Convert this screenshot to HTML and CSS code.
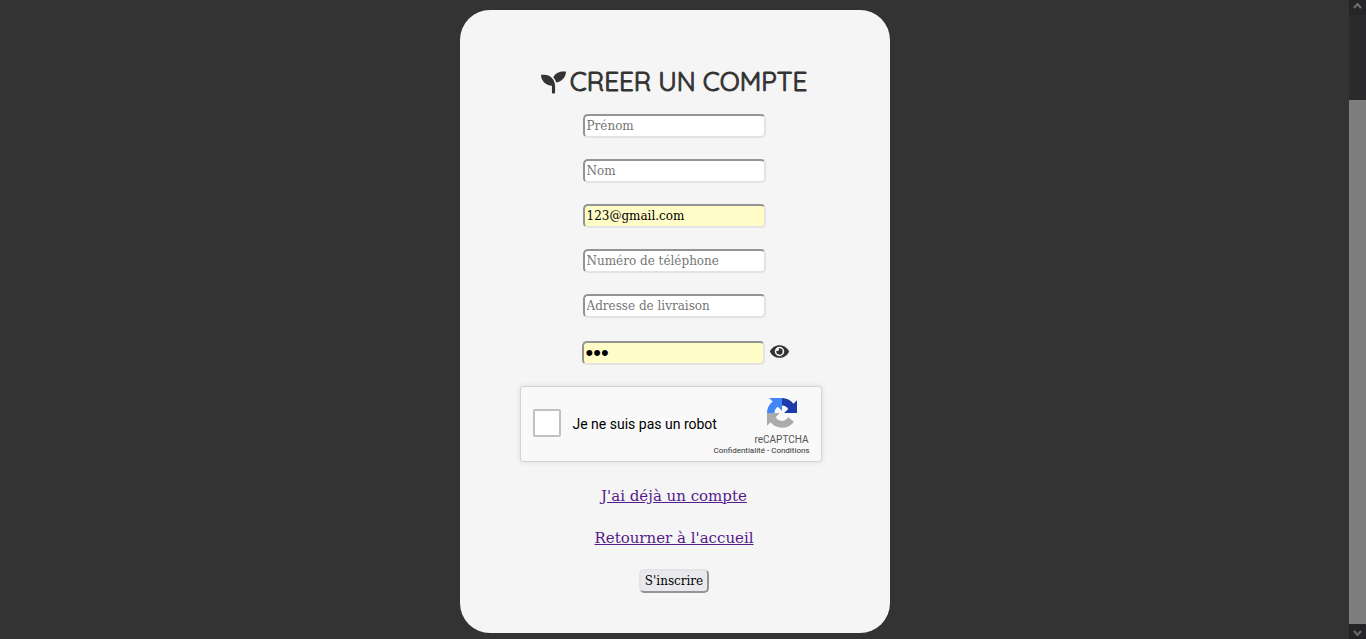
FILE: index.html
```
<!DOCTYPE html>
<html lang="fr">
<head>
<meta charset="utf-8">
<meta name="viewport" content="width=device-width, initial-scale=1">
<title>Créer un compte</title>
<link rel="stylesheet" href="styles.css">
</head>
<body>
<main class="page">
  <form class="card">
    <h1 class="title">
      <svg class="leaf" viewBox="0 0 512 512" aria-hidden="true"><path d="M64 96H0c0 123.700 100.300 224 224 224v144c0 8.800 7.200 16 16 16h32c8.800 0 16-7.200 16-16V320C288 196.300 187.700 96 64 96zm384-64c-84.200 0-157.400 46.500-195.700 115.200 27.700 30.200 48.200 66.900 59 107.600C424 243.100 512 147.900 512 32h-64z"/></svg>
      <span>CREER UN COMPTE</span>
    </h1>
    <div class="fields">
      <input class="field" type="text" placeholder="Prénom" aria-label="Prénom">
      <input class="field" type="text" placeholder="Nom" aria-label="Nom">
      <input class="field filled" type="email" value="123@gmail.com" aria-label="Adresse e-mail">
      <input class="field" type="tel" placeholder="Numéro de téléphone" aria-label="Numéro de téléphone">
      <input class="field" type="text" placeholder="Adresse de livraison" aria-label="Adresse de livraison">
    </div>
    <div class="password">
      <input class="field filled secret" type="password" value="123" aria-label="Mot de passe">
      <button class="reveal" type="button" aria-label="Afficher le mot de passe">
        <svg class="eye" viewBox="0 0 576 512" aria-hidden="true"><path d="M572.500 241.400C518.300 135.600 410.900 64 288 64S57.700 135.600 3.500 241.400a32.400 32.400 0 0 0 0 29.200C57.700 376.400 165.100 448 288 448s230.300-71.600 284.500-177.400a32.400 32.400 0 0 0 0-29.200zM288 400a144 144 0 1 1 144-144 143.900 143.900 0 0 1-144 144zm0-240a95.300 95.300 0 0 0-25.300 3.800 47.900 47.900 0 0 1-66.900 66.900A95.800 95.800 0 1 0 288 160z"/></svg>
      </button>
    </div>
    <div class="captcha">
      <label class="robot"><input class="tick" type="checkbox">Je ne suis pas un robot</label>
      <div class="brand">
        <svg class="logo" viewBox="0 0 64 64" aria-hidden="true">
          <path fill="#1c3aa9" d="M64 31.950V4.600l-7.600 7.600A31.900 31.900 0 0 0 32 0v16c6 0 10.600 3 13.200 7.300L36.500 32z"/>
          <path fill="#4285f4" d="M31.950 0H4.600l7.600 7.600A31.900 31.900 0 0 0 0 32h16c0-6 3-10.600 7.300-13.200L32 27.500z"/>
          <path fill="#ababab" d="M0 32v27.400l7.600-7.600A31.900 31.900 0 0 0 57.500 51L45 40.700c-2 3.700-4 5.500-6.800 6.700-8.200 3.700-16 .6-19.400-6.700L27.500 32z"/>
        </svg>
        <span class="brand-name">reCAPTCHA</span>
        <span class="terms"><a href="#">Confidentialité</a> - <a href="#">Conditions</a></span>
      </div>
    </div>
    <nav class="links">
      <a href="#">J'ai déjà un compte</a>
      <a href="#">Retourner à l'accueil</a>
    </nav>
    <button class="submit" type="submit">S'inscrire</button>
  </form>
</main>
<div class="scrollbar" aria-hidden="true">
  <svg class="arrow" viewBox="0 0 17 15"><path d="M5 8l3.500-4L12 8"/></svg>
  <div class="track"><div class="thumb"></div></div>
  <svg class="arrow" viewBox="0 0 17 15"><path d="M5 7l3.500 4L12 7"/></svg>
</div>
</body>
</html>
```
FILE: styles.css
```
* { box-sizing: border-box; }

body {
  display: flex;
  min-height: 100vh;
  margin: 0;
  background: #333;
  color: #333;
  font-family: "Roboto Slab", "DejaVu Serif", serif;
}

.page {
  flex: 1;
  display: flex;
  justify-content: center;
  align-items: flex-start;
  padding: 10px 0 6px 1px;
}

.card {
  display: flex;
  flex-direction: column;
  align-items: center;
  width: 100%;
  max-width: 430px;
  padding: 52px 42px 40px 40px;
  border-radius: 30px;
  background: #f5f5f5;
}

.title {
  display: flex;
  align-items: center;
  gap: 4px;
  margin: 0 0 12px;
  font: 400 26px/40px Quicksand, Lato, sans-serif;
  -webkit-text-stroke: 1px #333;
  white-space: nowrap;
}

.leaf {
  width: 25px;
  height: 25px;
  fill: #333;
}

.fields {
  display: flex;
  flex-direction: column;
  gap: 21px;
}

.field {
  width: 183px;
  height: 24px;
  padding: 1px 2px;
  border: 2px solid;
  border-color: #949494 #e3e3e3 #e3e3e3 #949494;
  border-radius: 5px;
  background: #fff;
  color: #000;
  font: 12px "Roboto Slab", "DejaVu Serif", serif;
}

.field::placeholder { color: #757575; }

.filled { background: #fffcc8; }

.secret { font: 22px "Liberation Sans", sans-serif; }

.password {
  display: flex;
  align-items: center;
  gap: 5px;
  margin-top: 23px;
  padding-left: 22px;
}

.reveal {
  display: flex;
  padding: 0 0 3px;
  border: 0;
  background: none;
}

.eye {
  width: 19px;
  height: 17px;
  fill: #333;
}

.captcha {
  display: flex;
  justify-content: space-between;
  width: 302px;
  height: 76px;
  margin: 21px 7px 0 0;
  padding: 0 11px 0 12px;
  border: 1px solid #d3d3d3;
  border-radius: 3px;
  background: #f9f9f9;
  box-shadow: 0 0 4px 1px rgba(0, 0, 0, .08);
  color: #000;
  font-family: Roboto, sans-serif;
}

.robot {
  flex: none;
  display: flex;
  align-items: center;
  gap: 12px;
  width: 180px;
  font-size: 14px;
  white-space: nowrap;
}

.tick {
  flex: none;
  appearance: none;
  width: 28px;
  height: 28px;
  margin: 0 0 2px;
  border: 2px solid #c1c1c1;
  border-radius: 2px;
  background: #fff;
}

.brand {
  flex: none;
  display: flex;
  flex-direction: column;
  align-items: flex-end;
  padding-top: 11px;
}

.logo {
  width: 30px;
  height: 30px;
  margin-right: 13px;
}

.brand-name {
  margin: 6px 1px 0 0;
  color: #555;
  font-size: 10px;
  line-height: 12px;
}

.terms {
  color: #333;
  font-size: 8px;
  line-height: 10px;
  white-space: nowrap;
}

.terms a {
  color: #333;
  text-decoration: none;
}

.links {
  display: flex;
  flex-direction: column;
  align-items: center;
  gap: 22px;
  margin-top: 24px;
  font-size: 15px;
  line-height: 20px;
}

.links a { color: #551a8b; }

.submit {
  height: 24px;
  margin-top: 21px;
  padding: 1px 4px;
  border: 2px solid;
  border-color: #e3e3e6 #949494 #949494 #e3e3e6;
  border-radius: 5px;
  background: #e9e9ed;
  color: #000;
  font: 12px "Roboto Slab", "DejaVu Serif", serif;
}

.scrollbar {
  display: flex;
  flex-direction: column;
  width: 17px;
  background: #2a2a2c;
}

.arrow {
  width: 17px;
  height: 15px;
  background: #252527;
  fill: none;
  stroke: #6d6d6f;
  stroke-width: 2;
}

.track {
  flex: 1;
  display: flex;
  align-items: flex-end;
}

.thumb {
  width: 100%;
  height: 86%;
  background: #7d7d7e;
}
```
